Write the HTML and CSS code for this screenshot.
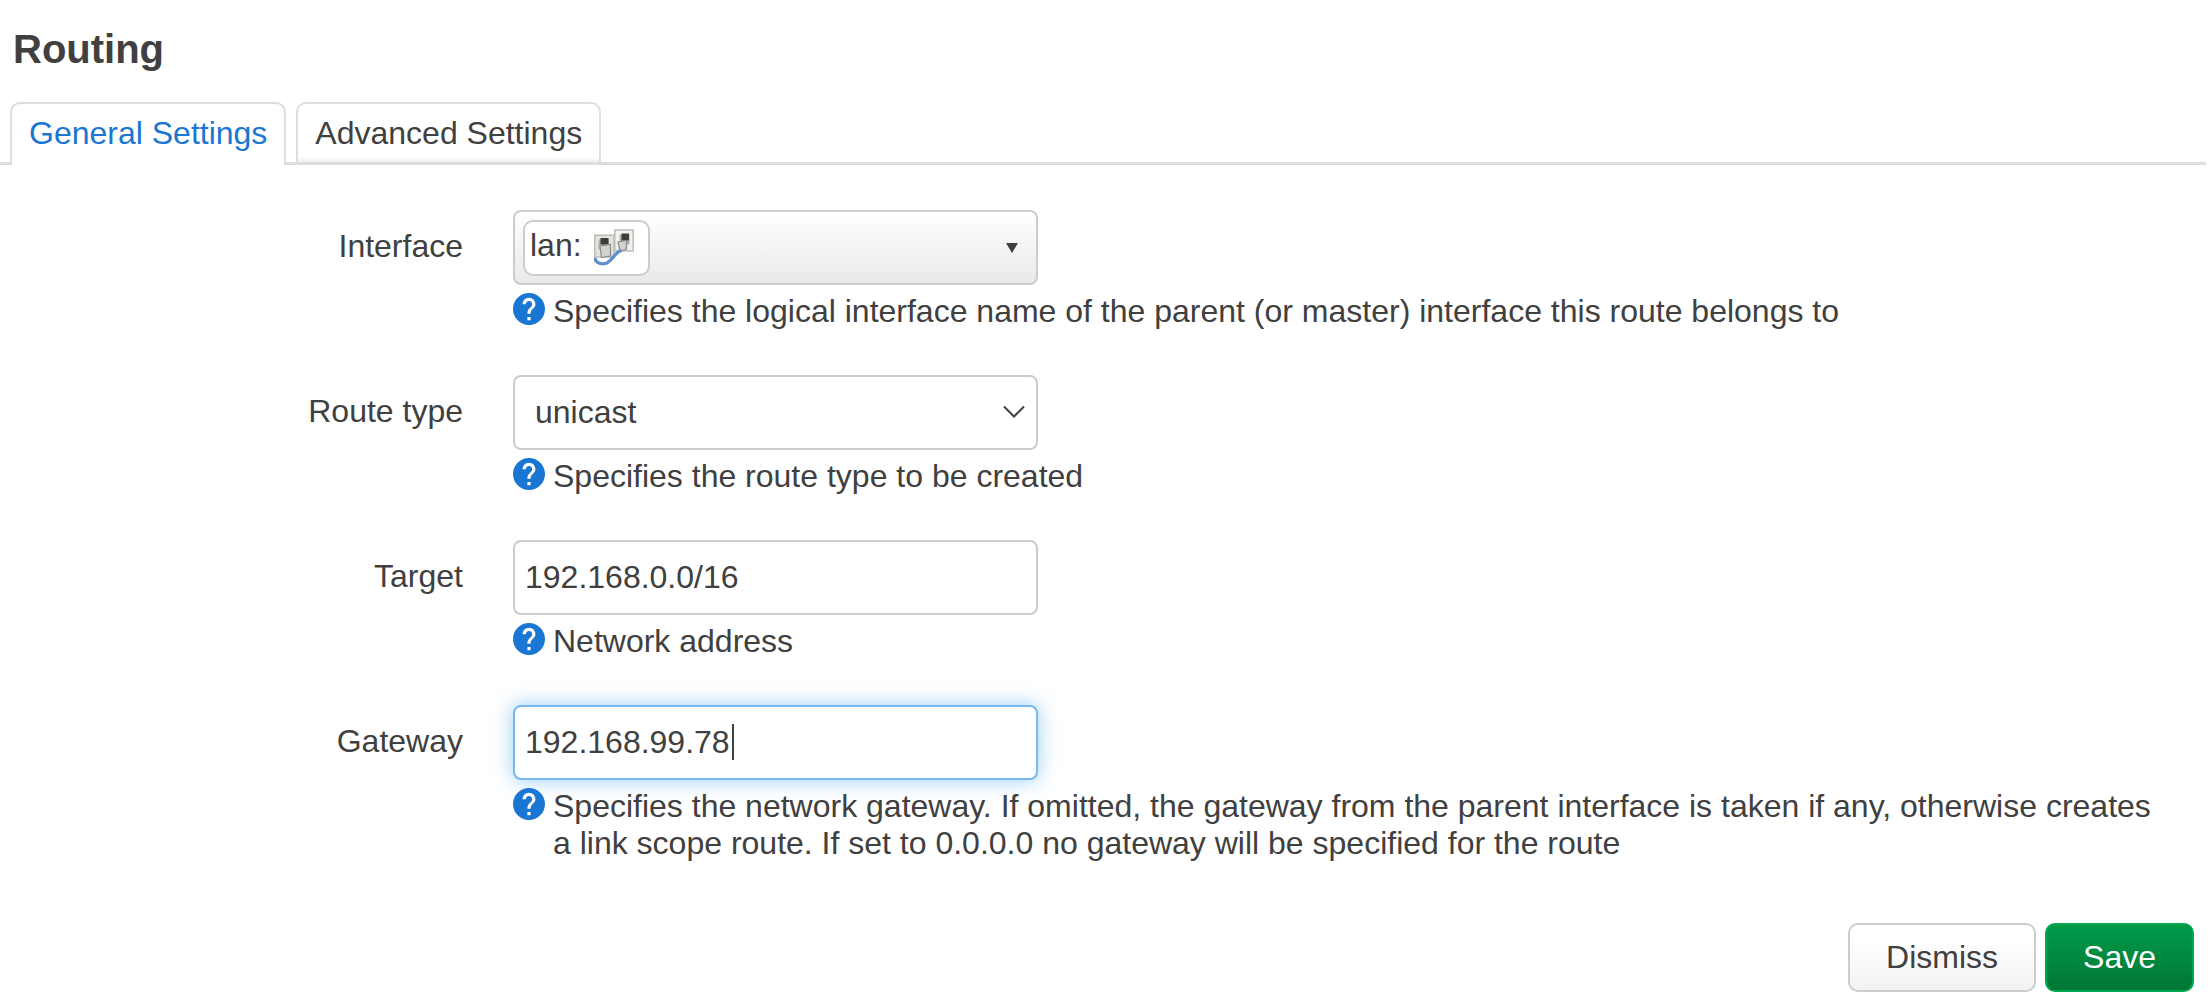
FILE: index.html
```html
<!DOCTYPE html>
<html lang="en">
<head>
    <meta charset="utf-8">
    <title>Routing</title>
    <link rel="stylesheet" href="styles.css">
</head>
<body>
    <svg class="defs" width="0" height="0">
        <symbol id="help" viewBox="2 2 20 20">
            <circle cx="12" cy="12" r="9" fill="#fff"/>
            <path fill="#1976d2" d="M12 2C6.480 2 2 6.480 2 12s4.480 10 10 10 10-4.480 10-10S17.520 2 12 2zm1 17h-2v-2h2v2zm2.070-7.750l-.9.920C13.450 12.900 13 13.500 13 15h-2v-.5c0-1.100.450-2.100 1.170-2.830l1.240-1.260c.370-.360.590-.860.590-1.410 0-1.100-.9-2-2-2s-2 .9-2 2H8c0-2.210 1.790-4 4-4s4 1.790 4 4c0 .880-.360 1.680-.930 2.250z"/>
        </symbol>
    </svg>
    <form class="modal">
        <h4>Routing</h4>
        <ul class="tabs">
            <li class="active"><a href="#general">General Settings</a></li>
            <li><a href="#advanced">Advanced Settings</a></li>
        </ul>
        <div class="section" id="general">
            <div class="row">
                <label for="interface">Interface</label>
                <div class="field">
                    <button type="button" id="interface" class="control dropdown">
                        <span class="badge">lan:
                            <svg width="40" height="40" viewBox="0 0 16 16">
                                <path d="M.3 3.300h7.700v8.700H.3z" fill="#e4e4de" stroke="#bdbdb8" stroke-width=".6"/>
                                <path d="M8.300 1.200h7.400v8.400H8.300z" fill="#f1f1ee" stroke="#bdbdb8" stroke-width=".6"/>
                                <path d="M1.800 5h4.200v4H1.800zM10.200 3h4v4h-4z" fill="#b4b4ae"/>
                                <path d="M2.600 4.400h3.200v2.600H2.600zM11 2.600h3v2.800h-3z" fill="#3c3c38"/>
                                <path d="M2.400 7.600l4.200-.6v4.600l-3.600.6zM9.600 6l3.400-.6v3.400l-2.600 1z" fill="#d2d2d0" stroke="#8c8c8a" stroke-width=".5"/>
                                <path d="M.3 12.300c.3 2 2.200 2.700 4.200 2.300 2.600-.5 3.500-4.400 6.500-5.200" fill="none" stroke="#5b8fd0" stroke-width="1.300"/>
                            </svg>
                        </span>
                        <span class="arrow"></span>
                    </button>
                    <div class="help"><svg><use href="#help"/></svg>Specifies the logical interface name of the parent (or master) interface this route belongs to</div>
                </div>
            </div>
            <div class="row">
                <label for="type">Route type</label>
                <div class="field">
                    <div class="select">
                        <select id="type" class="control">
                            <option>unicast</option>
                        </select>
                        <svg class="chevron" viewBox="0 0 22 14"><path d="M1 1.500l10 10 10-10" fill="none" stroke="#404040" stroke-width="2"/></svg>
                    </div>
                    <div class="help"><svg><use href="#help"/></svg>Specifies the route type to be created</div>
                </div>
            </div>
            <div class="row">
                <label for="target">Target</label>
                <div class="field">
                    <input id="target" class="control" type="text" value="192.168.0.0/16">
                    <div class="help"><svg><use href="#help"/></svg>Network address</div>
                </div>
            </div>
            <div class="row">
                <label for="gateway">Gateway</label>
                <div class="field">
                    <input id="gateway" class="control focus" type="text" value="192.168.99.78">
                    <div class="help"><svg><use href="#help"/></svg>Specifies the network gateway. If omitted, the gateway from the parent interface is taken if any, otherwise creates a link scope route. If set to 0.0.0.0 no gateway will be specified for the route</div>
                </div>
            </div>
        </div>
        <div class="actions">
            <button type="button" class="btn">Dismiss</button>
            <button type="submit" class="btn save">Save</button>
        </div>
    </form>
</body>
</html>
```

FILE: styles.css
```css
* {
    box-sizing: border-box;
}
body {
    margin: 0;
    background: #fff;
    color: #404040;
    font-family: "Liberation Sans", Arial, sans-serif;
    font-size: 32px;
    line-height: 37px;
}
button, input, select {
    color: inherit;
    font: inherit;
}
.defs {
    position: absolute;
}
h4 {
    margin: 0;
    padding: 26px 13px 30px;
    font-size: 40px;
    line-height: 46px;
}
.tabs {
    display: flex;
    gap: 10px;
    margin: 0 6px 45px 0;
    padding: 0 10px;
    list-style: none;
    box-shadow: inset 0 -3px #ddd;
}
.tabs li {
    height: 63px;
    padding: 11px 17px 0;
    border: 2px solid #ddd;
    border-bottom: 0;
    border-radius: 10px 10px 0 0;
    background: linear-gradient(#fff 53px, #eee 58px, #ddd 58px);
}
.tabs .active {
    background: #fff;
}
.tabs a {
    color: #404040;
    text-decoration: none;
}
.tabs .active a {
    color: #1976d2;
}
.row {
    display: flex;
    gap: 50px;
    margin-bottom: 45px;
}
.row label {
    flex: 0 0 463px;
    padding-top: 18px;
    text-align: right;
}
.field {
    flex: 1;
    padding-right: 40px;
}
.control {
    display: block;
    width: 525px;
    height: 75px;
    padding: 0 10px;
    border: 2px solid #ccc;
    border-radius: 8px;
    background: #fff;
}
.dropdown {
    display: flex;
    align-items: center;
    justify-content: space-between;
    padding: 0 18px 0 8px;
    background: linear-gradient(#fff, #e9e9e9);
}
.badge {
    display: flex;
    align-items: flex-start;
    gap: 12px;
    height: 56px;
    padding: 5px 14px 0 5px;
    border: 2px solid #ccc;
    border-radius: 10px;
    background: #fff;
}
.arrow {
    border: 6px solid transparent;
    border-top: 10px solid #404040;
    border-bottom: 0;
}
.select {
    position: relative;
    width: 525px;
}
.select select {
    padding-left: 20px;
    appearance: none;
}
.chevron {
    position: absolute;
    top: 30px;
    right: 13px;
    width: 22px;
    height: 14px;
}
.focus {
    border-color: #75b9f0;
    outline: none;
    /* text cursor after the last digit */
    background: linear-gradient(#404040, #404040) 217px 17px / 2px 36px no-repeat #fff;
    box-shadow: 0 0 20px rgba(82, 168, 236, .6);
}
.help {
    position: relative;
    padding: 8px 0 0 40px;
}
.help svg {
    position: absolute;
    top: 8px;
    left: 0;
    width: 32px;
    height: 32px;
}
.actions {
    display: flex;
    justify-content: flex-end;
    gap: 9px;
    padding: 16px 18px;
}
.btn {
    height: 69px;
    padding: 0 36px;
    border: 2px solid #ccc;
    border-radius: 10px;
    background: linear-gradient(#fff 25%, #f2f2f2);
}
.save {
    border-color: #00a650;
    background: linear-gradient(#009a49, #007835);
    color: #fff;
}
```
